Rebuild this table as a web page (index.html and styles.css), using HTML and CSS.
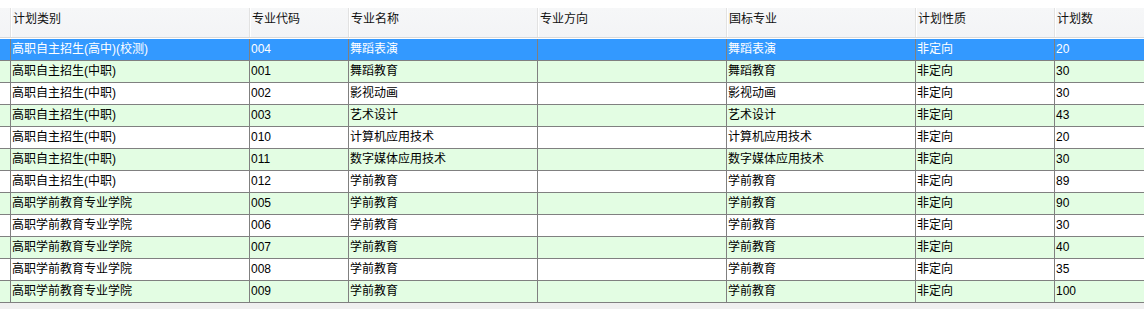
FILE: index.html
```html
<!DOCTYPE html>
<html lang="zh-CN">
<head>
<meta charset="utf-8">
<title>计划列表</title>
<link rel="stylesheet" href="styles.css">
</head>
<body>
<div class="grid">
  <div class="row head">
    <div class="cell"></div>
    <div class="cell">计划类别</div>
    <div class="cell">专业代码</div>
    <div class="cell">专业名称</div>
    <div class="cell">专业方向</div>
    <div class="cell">国标专业</div>
    <div class="cell">计划性质</div>
    <div class="cell">计划数</div>
  </div>
  <div class="body">
    <div class="row sel"><div class="cell"></div><div class="cell">高职自主招生(高中)(校测)</div><div class="cell">004</div><div class="cell">舞蹈表演</div><div class="cell"></div><div class="cell">舞蹈表演</div><div class="cell">非定向</div><div class="cell">20</div></div>
    <div class="row alt"><div class="cell"></div><div class="cell">高职自主招生(中职)</div><div class="cell">001</div><div class="cell">舞蹈教育</div><div class="cell"></div><div class="cell">舞蹈教育</div><div class="cell">非定向</div><div class="cell">30</div></div>
    <div class="row"><div class="cell"></div><div class="cell">高职自主招生(中职)</div><div class="cell">002</div><div class="cell">影视动画</div><div class="cell"></div><div class="cell">影视动画</div><div class="cell">非定向</div><div class="cell">30</div></div>
    <div class="row alt"><div class="cell"></div><div class="cell">高职自主招生(中职)</div><div class="cell">003</div><div class="cell">艺术设计</div><div class="cell"></div><div class="cell">艺术设计</div><div class="cell">非定向</div><div class="cell">43</div></div>
    <div class="row"><div class="cell"></div><div class="cell">高职自主招生(中职)</div><div class="cell">010</div><div class="cell">计算机应用技术</div><div class="cell"></div><div class="cell">计算机应用技术</div><div class="cell">非定向</div><div class="cell">20</div></div>
    <div class="row alt"><div class="cell"></div><div class="cell">高职自主招生(中职)</div><div class="cell">011</div><div class="cell">数字媒体应用技术</div><div class="cell"></div><div class="cell">数字媒体应用技术</div><div class="cell">非定向</div><div class="cell">30</div></div>
    <div class="row"><div class="cell"></div><div class="cell">高职自主招生(中职)</div><div class="cell">012</div><div class="cell">学前教育</div><div class="cell"></div><div class="cell">学前教育</div><div class="cell">非定向</div><div class="cell">89</div></div>
    <div class="row alt"><div class="cell"></div><div class="cell">高职学前教育专业学院</div><div class="cell">005</div><div class="cell">学前教育</div><div class="cell"></div><div class="cell">学前教育</div><div class="cell">非定向</div><div class="cell">90</div></div>
    <div class="row"><div class="cell"></div><div class="cell">高职学前教育专业学院</div><div class="cell">006</div><div class="cell">学前教育</div><div class="cell"></div><div class="cell">学前教育</div><div class="cell">非定向</div><div class="cell">30</div></div>
    <div class="row alt"><div class="cell"></div><div class="cell">高职学前教育专业学院</div><div class="cell">007</div><div class="cell">学前教育</div><div class="cell"></div><div class="cell">学前教育</div><div class="cell">非定向</div><div class="cell">40</div></div>
    <div class="row"><div class="cell"></div><div class="cell">高职学前教育专业学院</div><div class="cell">008</div><div class="cell">学前教育</div><div class="cell"></div><div class="cell">学前教育</div><div class="cell">非定向</div><div class="cell">35</div></div>
    <div class="row alt"><div class="cell"></div><div class="cell">高职学前教育专业学院</div><div class="cell">009</div><div class="cell">学前教育</div><div class="cell"></div><div class="cell">学前教育</div><div class="cell">非定向</div><div class="cell">100</div></div>
  </div>
  <div class="footer"></div>
</div>
</body>
</html>
```
FILE: styles.css
```css
html, body {
  margin: 0;
  padding: 0;
  background: #ffffff;
}
body {
  width: 1144px;
  height: 309px;
  overflow: hidden;
  font-family: "Liberation Sans", "Noto Sans CJK SC", sans-serif;
  font-size: 12px;
  color: #000;
}
.grid {
  padding-top: 8px;
}
.row {
  display: grid;
  grid-template-columns: 10px 239px 99px 189px 189px 189px 139px 1fr;
}
.cell {
  white-space: nowrap;
  overflow: hidden;
}
.head {
  height: 29px;
  background: linear-gradient(#f6f7f8, #f3f4f6);
  border-bottom: 1px solid #d9d9d9;
  margin-bottom: 1px;
}
.head .cell {
  padding: 3px 0 0 2px;
  line-height: 16px;
  color: #111;
}
.head .cell + .cell {
  border-left: 1px solid #e2e2e2;
  box-shadow: inset 1px 0 0 #ffffff;
}
.body .row {
  height: 21px;
  border-bottom: 1px solid #808080;
  background: #ffffff;
}
.body .row.alt {
  background: #e3fde3;
}
.body .row.sel {
  background: #3399ff;
  color: #ffffff;
}
.body .cell {
  line-height: 21px;
  padding-left: 1px;
}
.body .cell + .cell {
  border-left: 1px solid #808080;
}
.footer {
  height: 6px;
  background: #f0f0f0;
}
```
